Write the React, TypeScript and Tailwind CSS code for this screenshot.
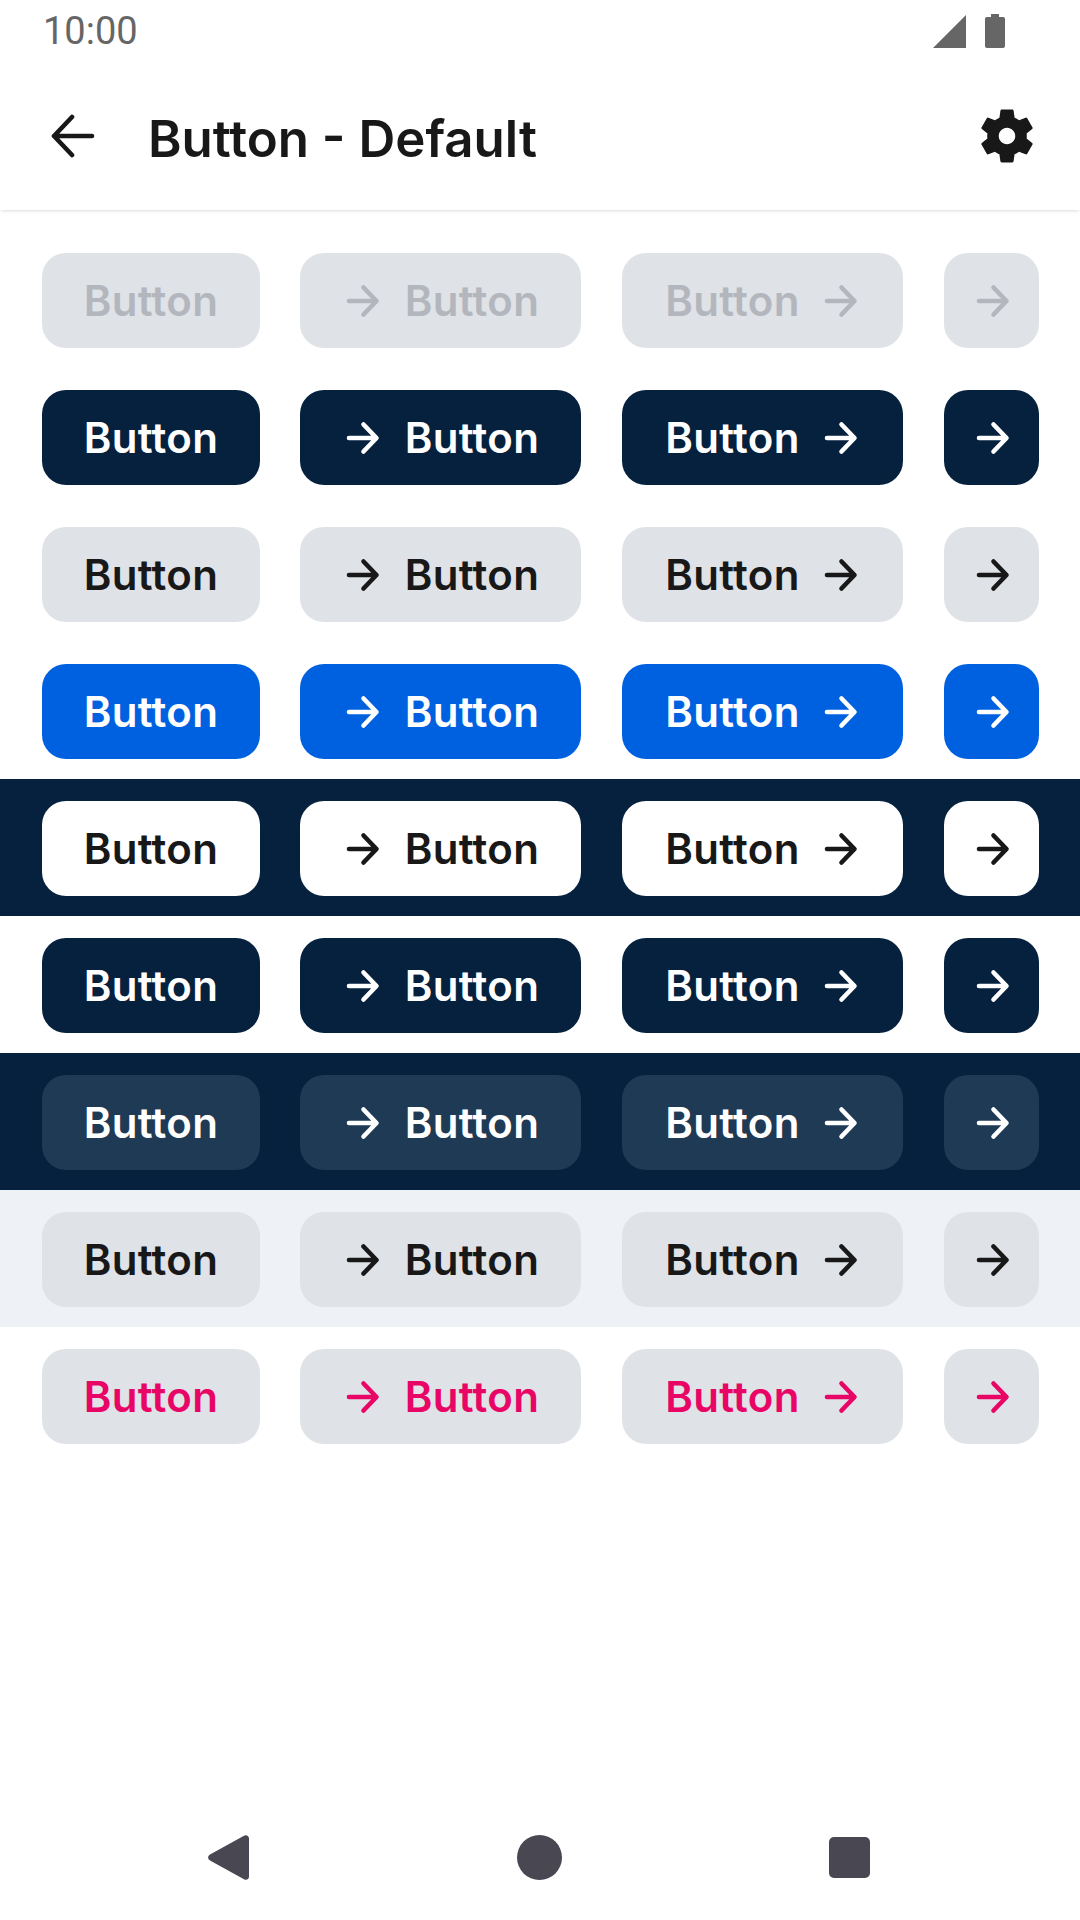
const font = { fontFamily: "Inter, 'Noto Sans', sans-serif" };

const Arrow = ({ className = "" }: { className?: string }) => (
  <svg viewBox="0 0 40 40" className={`w-10 h-10 shrink-0 ${className}`} fill="none" stroke="currentColor" strokeWidth="4.6" strokeLinecap="round" strokeLinejoin="round">
    <path d="M7 20h27M21.500 6.500L34.500 20l-13 13.500" />
  </svg>
);

type RowStyle = { band: string; btn: string; text: string };

const rows: RowStyle[] = [
  { band: "", btn: "bg-[#dfe2e7]", text: "text-[#b3b7bd]" },
  { band: "", btn: "bg-[#05213e]", text: "text-white" },
  { band: "", btn: "bg-[#dfe2e7]", text: "text-[#181818]" },
  { band: "", btn: "bg-[#0061e0]", text: "text-white" },
  { band: "bg-[#05213e]", btn: "bg-white", text: "text-[#181818]" },
  { band: "", btn: "bg-[#05213e]", text: "text-white" },
  { band: "bg-[#05213e]", btn: "bg-[#1f3a54]", text: "text-white" },
  { band: "bg-[#eef1f6]", btn: "bg-[#dfe2e7]", text: "text-[#181818]" },
  { band: "", btn: "bg-[#dfe2e7]", text: "text-[#e80566]" },
];

const ButtonRow = ({ band, btn, text }: RowStyle) => {
  const base = `h-[95px] rounded-[24px] flex items-center text-[42px] font-semibold tracking-[0.3px] ${btn} ${text}`;
  return (
    <div className={`h-[137px] pt-[22px] pl-[42px] flex gap-[41px] ${band}`}>
      <div className={`${base} w-[218px] mr-[-1px] justify-center`}>Button</div>
      <div className={`${base} w-[281px] justify-center gap-[23px]`}>
        <Arrow />
        <span>Button</span>
      </div>
      <div className={`${base} w-[281px] justify-center gap-[20px]`}>
        <span>Button</span>
        <Arrow />
      </div>
      <div className={`${base} w-[95px] justify-center`}>
        <Arrow />
      </div>
    </div>
  );
};

export default function App() {
  return (
    <div className="w-[1080px] h-[1920px] bg-white flex flex-col overflow-hidden" style={font}>
      {/* Status bar */}
      <div className="h-[62px] flex items-center justify-between pl-[43px] pr-[75px] text-[#666666]">
        <span className="text-[38px] leading-none" style={{ fontFamily: "Roboto, sans-serif" }}>10:00</span>
        <div className="flex items-center gap-[19px]">
          <svg viewBox="0 0 33 33" className="w-[33px] h-[33px]" fill="currentColor">
            <path d="M33 0v33H0z" />
          </svg>
          <svg viewBox="0 0 20 34" className="w-[20px] h-[34px]" fill="currentColor">
            <path d="M6 0h8v3h4c1.200 0 2 .8 2 2v27c0 1.200-.8 2-2 2H2c-1.200 0-2-.8-2-2V5c0-1.200.8-2 2-2h4z" />
          </svg>
        </div>
      </div>

      {/* Toolbar */}
      <div className="h-[148px] flex items-center shadow-[0_2px_3px_-1px_rgba(0,0,0,0.14)] text-[#181818] relative">
        <svg viewBox="0 0 44 44" className="w-[44px] h-[44px] ml-[51px]" fill="none" stroke="currentColor" strokeWidth="4.6" strokeLinecap="round" strokeLinejoin="round">
          <path d="M41 22H3M21 3L3 22l18 19" />
        </svg>
        <h1 className="ml-[53px] mt-[4px] text-[51px] font-semibold leading-none">Button - Default</h1>
        <svg viewBox="0 0 24 24" className="w-[66px] h-[66px] ml-auto mr-[40px]" fill="currentColor">
          <path d="M19.140 12.940c.04-.3.06-.61.06-.94 0-.32-.02-.64-.07-.94l2.030-1.580c.18-.14.23-.41.12-.61l-1.920-3.320c-.12-.22-.37-.29-.59-.22l-2.390.96c-.5-.38-1.030-.7-1.620-.94l-.36-2.540c-.04-.24-.24-.41-.48-.41h-3.840c-.24 0-.43.17-.47.41l-.36 2.540c-.59.24-1.130.57-1.620.94l-2.390-.96c-.22-.08-.47 0-.59.22L2.740 8.870c-.12.21-.08.47.12.61l2.030 1.580c-.05.3-.09.63-.09.94s.02.64.07.94l-2.030 1.580c-.18.14-.23.41-.12.61l1.920 3.320c.12.22.37.29.59.22l2.390-.96c.5.38 1.030.7 1.620.94l.36 2.540c.05.24.24.41.48.41h3.840c.24 0 .44-.17.47-.41l.36-2.540c.59-.24 1.130-.56 1.620-.94l2.390.96c.22.08.47 0 .59-.22l1.920-3.320c.12-.22.07-.47-.12-.61l-2.010-1.580zM12 15c-1.650 0-3-1.350-3-3s1.350-3 3-3 3 1.350 3 3-1.350 3-3 3z" />
        </svg>
      </div>

      {/* Buttons */}
      <div className="pt-[21px] flex flex-col">
        {rows.map((r, i) => (
          <ButtonRow key={i} {...r} />
        ))}
      </div>

      {/* Nav bar */}
      <div className="mt-auto h-[85px] pl-[208px] flex text-[#484752]">
        <svg viewBox="0 0 41 45" className="w-[41px] h-[45px]" fill="currentColor">
          <path d="M36 .8c2-1.500 5-.2 5 2.700v38c0 2.900-3 4.200-5 2.700L2 25.500c-2.500-1.500-2.500-4.500 0-6z" />
        </svg>
        <div className="ml-[268px] w-[45px] h-[45px] rounded-full bg-[#484752]" />
        <div className="ml-[267px] mt-[2px] w-[41px] h-[41px] rounded-[5px] bg-[#484752]" />
      </div>
    </div>
  );
}
